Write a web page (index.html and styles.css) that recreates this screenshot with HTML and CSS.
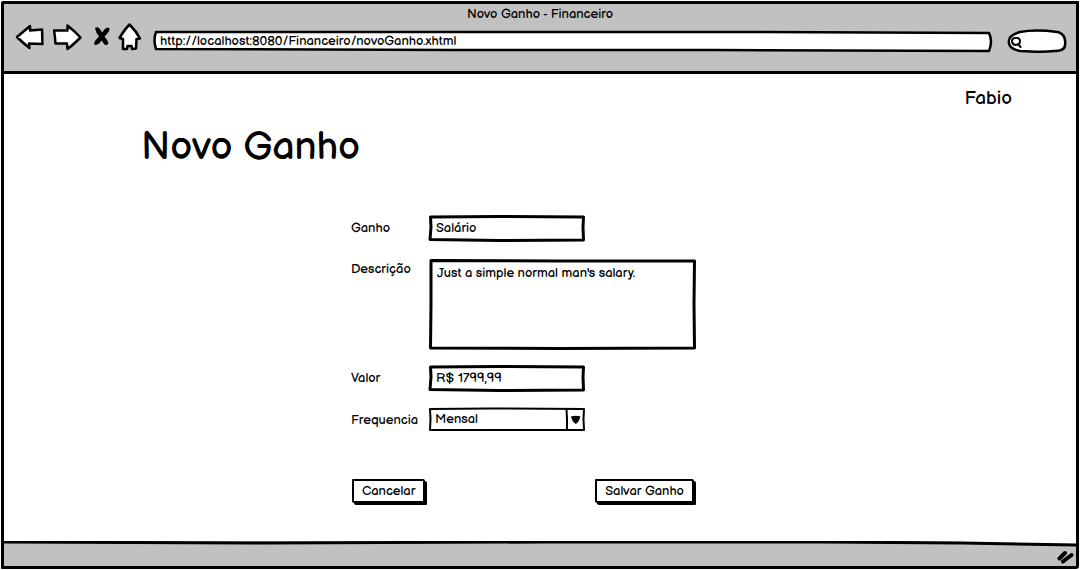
FILE: index.html
```html
<!DOCTYPE html>
<html lang="pt">
<head>
<meta charset="utf-8">
<title>Novo Ganho - Financeiro</title>
<link rel="stylesheet" href="styles.css">
</head>
<body>
<div class="browser">
  <header class="chrome">
    <div class="window-title">Novo Ganho - Financeiro</div>
    <div class="toolbar">
      <nav class="nav">
        <button class="icon-button" type="button" aria-label="Voltar">
          <svg width="30" height="28" viewBox="0 0 30 28"><path d="M2 14 L15 3 L15 7.500 L27 6.500 C27.500 11 27 15 27.500 21 L14 20.500 L14.500 25 C10 21.500 7 19 2 14 Z"/></svg>
        </button>
        <button class="icon-button" type="button" aria-label="Avançar">
          <svg width="30" height="28" viewBox="0 0 30 28"><path d="M1 7.500 L14.500 7.500 L14.500 2.500 C19 6 23 9.500 27.500 14.500 C23 19 20 22 14.500 26 L14 20.500 L2.500 20.500 C2 16 2 12 1 7.500 Z"/></svg>
        </button>
        <button class="icon-button narrow" type="button" aria-label="Parar">
          <svg width="20" height="28" viewBox="0 0 20 28"><path class="cross" d="M3 5 Q5.500 3.500 7.500 5.500 Q9 8 10.500 9.500 Q12.500 5 16 4.500 Q18.500 5.500 17 8 Q15 11.500 12.500 13.500 Q15 16.500 16.500 20 Q16 22.500 13 22 Q11 19.500 9.500 17.500 Q7 21.500 3.500 22 Q1 21 3 18 Q5 15.500 7 13.500 Q4 10 3 5 Z"/></svg>
        </button>
        <button class="icon-button" type="button" aria-label="Página inicial">
          <svg width="26" height="30" viewBox="0 0 26 30"><path d="M12.500 2.500 C8.500 6.500 5.500 11 2.500 16 L6 17 L6 27 L10 27 L10.500 24 L14.500 24 L15 27 L19 26.500 L19.500 17 L23 16.500 C20 10.500 17 7 12.500 2.500 Z"/></svg>
        </button>
      </nav>
      <div class="sketch address">
        <svg class="frame" viewBox="0 0 840 22" preserveAspectRatio="none" aria-hidden="true"><path d="M3 2 L200 2 L420 2 L600 2 L836 3 Q840 11 836 21 L560 20 L300 20 L3 19 Q0 10 3 2 Z"/></svg>
        <input class="field" type="text" aria-label="Endereço" value="http://localhost:8080/Financeiro/novoGanho.xhtml">
      </div>
      <div class="sketch search">
        <svg class="frame" viewBox="0 0 60 25" preserveAspectRatio="none" aria-hidden="true"><path d="M13 3 C28 0 43 2 51 3 C57 5 59 9 58 16 C58 20 54 22 47 22 C33 24 24 22 13 22 C-2 19 -2 7 13 3 Z"/></svg>
        <svg class="lens" width="12" height="13" viewBox="0 0 12 13" aria-hidden="true"><path d="M1 5 C0 0 9 -1 9 4 C9 9 2 9 1 5 Z M7 7 L9.500 10"/></svg>
        <input class="field" type="search" aria-label="Pesquisar">
      </div>
    </div>
  </header>

  <main class="page">
    <div class="user">Fabio</div>
    <h1 class="heading">Novo Ganho</h1>
    <form class="form">
      <label class="label" for="ganho">Ganho</label>
      <div class="sketch short">
        <svg class="frame thick" viewBox="0 0 156 26" preserveAspectRatio="none" aria-hidden="true"><path d="M1.500 2 L70 1.500 L154.500 2 L154 12 L154.500 25 L70 25.500 L1 24.500 L2 12 Z"/></svg>
        <input class="field" id="ganho" type="text" value="Salário">
      </div>

      <label class="label label-area" for="descricao">Descrição</label>
      <div class="sketch sketch-area">
        <svg class="frame thick" viewBox="0 0 267 91" preserveAspectRatio="none" aria-hidden="true"><path d="M2 1.500 L130 2 L265.500 2 L265 45 L265.500 90 L130 90.500 L1.500 90 L2 45 Z"/></svg>
        <textarea class="field area" id="descricao">Just a simple normal man's salary.</textarea>
      </div>

      <label class="label" for="valor">Valor</label>
      <div class="sketch short">
        <svg class="frame thick" viewBox="0 0 156 26" preserveAspectRatio="none" aria-hidden="true"><path d="M1.500 2 L70 1.500 L154.500 2 L154 12 L154.500 25 L70 25.500 L1 24.500 L2 12 Z"/></svg>
        <input class="field" id="valor" type="text" value="R$ 1799,99">
      </div>

      <label class="label" for="frequencia">Frequencia</label>
      <div class="sketch short">
        <svg class="frame" viewBox="0 0 156 24" preserveAspectRatio="none" aria-hidden="true"><path d="M1 2 L60 1.500 L155 2 L154.500 12 L155 23 L1 23 L1.500 12 Z"/></svg>
        <select class="field choice" id="frequencia"><option>Mensal</option></select>
        <svg class="arrow" width="20" height="24" viewBox="0 0 20 24" aria-hidden="true"><path class="divider" d="M1.500 2 L2 12 L2 23"/><path class="tip" d="M6 9.500 Q10.500 8 15.500 9.500 Q14.500 14 11 17 Q7 15 6 9.500 Z"/></svg>
      </div>

      <div class="actions">
        <button class="push" type="button">Cancelar</button>
        <button class="push" type="submit">Salvar Ganho</button>
      </div>
    </form>
  </main>

  <footer class="status">
    <svg class="edge" viewBox="0 0 1074 6" preserveAspectRatio="none" aria-hidden="true"><path class="cover" d="M0 0 L900 0 L1074 3 L1074 0 Z"/><path class="rule" d="M0 1 L260 2 L540 1 L820 1 L960 2 L1074 4"/></svg>
    <svg class="grip" width="18" height="16" viewBox="0 0 18 16" aria-hidden="true"><path d="M2.500 9.500 L8 4 M6 12.500 L14.500 6"/></svg>
  </footer>
</div>
</body>
</html>
```
FILE: styles.css
```css
* {
  box-sizing: border-box;
}

body {
  margin: 0;
  padding: 1px;
  background: #fff;
  color: #000;
  font-family: "Balsamiq Sans", Lato, sans-serif;
  font-size: 13px;
  line-height: 16px;
}

.browser {
  display: flex;
  flex-direction: column;
  min-height: calc(100vh - 2px);
  border: 3px solid #000;
  border-radius: 2px 1px 3px 1px;
}

.chrome {
  height: 70px;
  background: #c1c1c1;
  border-bottom: 3px solid #000;
}

.window-title {
  padding-top: 2px;
  text-align: center;
}

.toolbar {
  display: flex;
  align-items: flex-start;
  gap: 10px;
  padding: 0 9px 0 11px;
}

.nav {
  display: flex;
  align-items: center;
  gap: 8px;
}

.icon-button {
  display: flex;
  padding: 0;
  border: 0;
  background: none;
}

.icon-button path {
  fill: #fff;
  stroke: #000;
  stroke-width: 2.5;
  stroke-linejoin: round;
}

.icon-button .cross {
  fill: #000;
  stroke: none;
}

.narrow {
  margin: 0 -3px 0 1px;
}

.sketch {
  position: relative;
  display: flex;
}

.frame {
  position: absolute;
  inset: 0;
  width: 100%;
  height: 100%;
  overflow: visible;
}

.frame path {
  fill: #fff;
  stroke: #000;
  stroke-width: 2;
  stroke-linejoin: round;
  vector-effect: non-scaling-stroke;
}

.frame.thick path {
  stroke-width: 3;
}

.address .frame path,
.search .frame path {
  stroke-width: 2.5;
}

.field {
  position: relative;
  width: 100%;
  height: 26px;
  margin: 0;
  padding: 0 7px;
  border: 0;
  outline: 0;
  background: transparent;
  color: inherit;
  font: inherit;
}

.address {
  flex: 1;
  margin-top: 8px;
}

.address .field {
  height: 22px;
}

.search {
  width: 60px;
  margin: 7px 0 0 4px;
}

.search .field {
  height: 25px;
  padding-left: 18px;
}

.lens {
  position: absolute;
  left: 4px;
  top: 8px;
}

.lens path {
  fill: none;
  stroke: #000;
  stroke-width: 2;
  stroke-linecap: round;
}

.page {
  flex: 1;
  background: #fff;
}

.user {
  padding: 14px 64px 0 0;
  font-size: 19px;
  line-height: 22px;
  text-align: right;
}

.heading {
  margin: 14px 0 0 137px;
  font-size: 39px;
  font-weight: 400;
  line-height: 48px;
}

.form {
  display: grid;
  grid-template-columns: 78px 1fr;
  width: 345px;
  margin: 43px 0 36px 347px;
  row-gap: 16px;
}

.label {
  padding-top: 5px;
}

.short {
  width: 156px;
}

.sketch-area {
  margin-top: 2px;
}

.area {
  height: 90px;
  padding: 6px 8px;
  resize: none;
}

.label-area {
  padding-top: 4px;
}

.choice {
  height: 24px;
  padding: 0 20px 0 6px;
  appearance: none;
}

.arrow {
  position: absolute;
  right: 0;
  top: 0;
  pointer-events: none;
}

.divider {
  fill: none;
  stroke: #000;
  stroke-width: 2;
}

.actions {
  grid-column: 1 / -1;
  display: flex;
  justify-content: space-between;
  padding: 32px 2px 0 1px;
}

.push {
  height: 24px;
  padding: 0 8px;
  border: 2px solid #000;
  border-radius: 1px 2px 1px 2px;
  background: #fff;
  box-shadow: 2px 2px 0 #000;
  color: inherit;
  font: inherit;
}

.status {
  position: relative;
  display: flex;
  align-items: flex-end;
  justify-content: flex-end;
  height: 25px;
  background: #c1c1c1;
}

.edge {
  position: absolute;
  left: 0;
  top: 0;
  width: 100%;
  height: 6px;
}

.cover {
  fill: #fff;
}

.rule {
  fill: none;
  stroke: #000;
  stroke-width: 3;
  vector-effect: non-scaling-stroke;
}

.grip {
  margin: 0 1px 1px 0;
}

.grip path {
  stroke: #000;
  stroke-width: 4;
  stroke-linecap: round;
}
```
